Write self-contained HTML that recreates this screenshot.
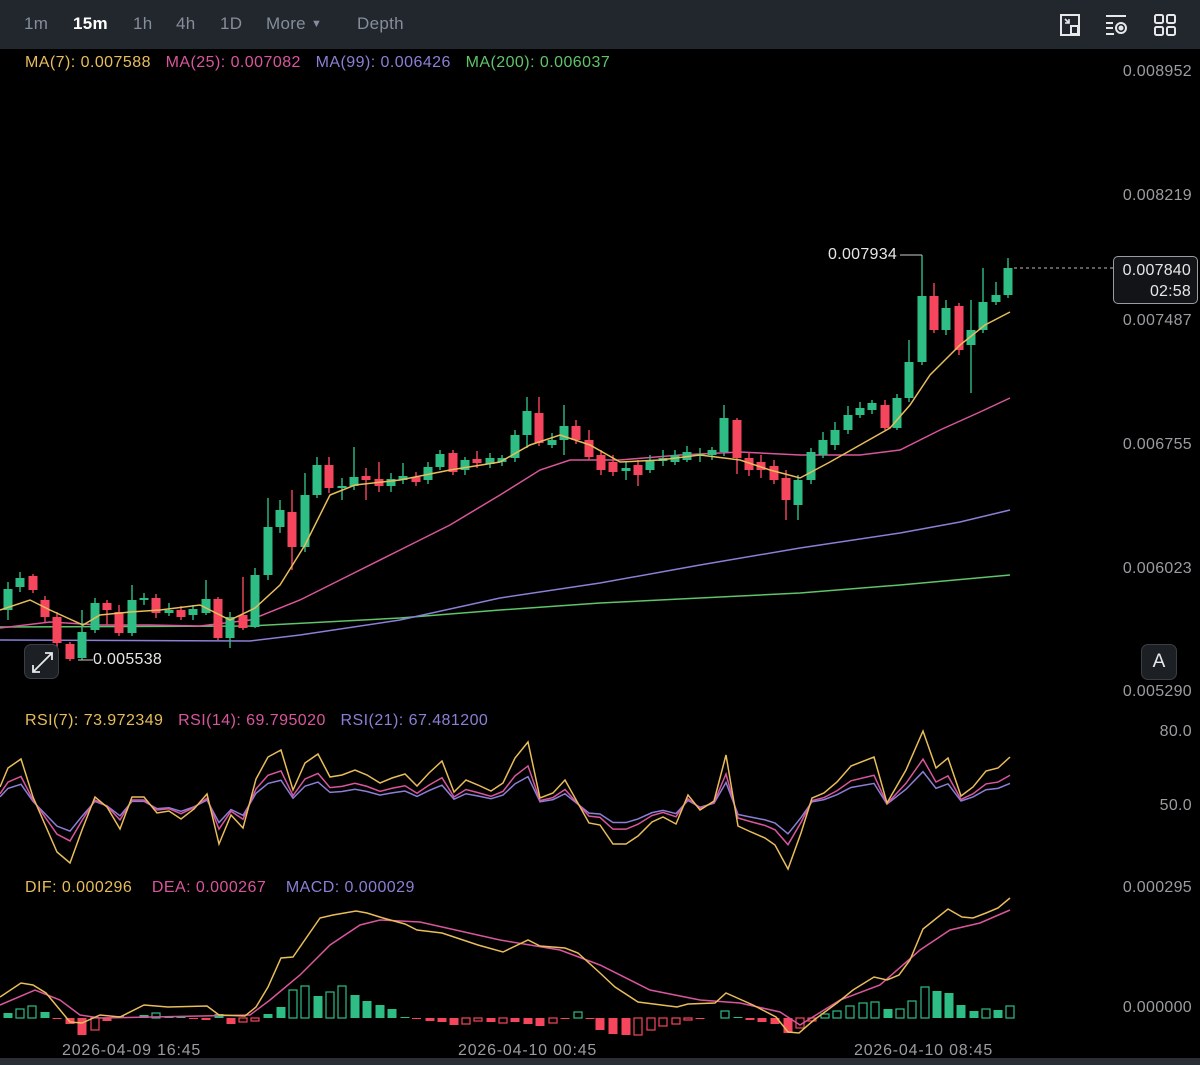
<!DOCTYPE html>
<html><head><meta charset="utf-8"><style>
*{margin:0;padding:0;box-sizing:border-box}
body{width:1200px;height:1065px;background:#000;overflow:hidden;position:relative;font-family:"Liberation Sans",sans-serif}
.t{position:absolute;white-space:nowrap}
.top{position:absolute;left:0;top:0;width:1200px;height:49px;background:#22262d}
.tab{position:absolute;top:14px;font-size:17px;color:#848e9c;letter-spacing:0.3px}
.ax{position:absolute;right:8px;font-size:16px;letter-spacing:0.3px;color:#9a9ca0;text-align:right}
.lg{position:absolute;font-size:16px;letter-spacing:0.45px;white-space:nowrap}
.dt{position:absolute;top:1042px;font-size:16px;letter-spacing:0.8px;color:#9a9ca0;white-space:nowrap}
</style></head><body>
<div class="top">
<span class="tab" style="left:24px">1m</span>
<span class="tab" style="left:73px;color:#fff;font-weight:bold">15m</span>
<span class="tab" style="left:133px">1h</span>
<span class="tab" style="left:176px">4h</span>
<span class="tab" style="left:220px">1D</span>
<span class="tab" style="left:266px">More <span style="font-size:11px;position:relative;top:-2px">▼</span></span>
<span class="tab" style="left:357px">Depth</span>
<svg style="position:absolute;left:1055px;top:12px" width="130" height="26" viewBox="0 0 130 26" fill="none" stroke="#e6e8ea" stroke-width="2">
<path d="M6 3h18v20H6z M6 3v20"/><path d="M16 14h7v8h-7z" fill="#22262d"/><path d="M10 7l4 4M10 11h4V7" stroke-width="1.6"/>
<path d="M51 4h20M51 11h7M51 16h7M51 22h8"/><circle cx="66" cy="16" r="5"/><circle cx="66" cy="16" r="1.5" fill="#e6e8ea"/>
<rect x="100" y="3" width="8" height="8" rx="1.5"/><rect x="112" y="3" width="8" height="8" rx="1.5"/><rect x="100" y="15" width="8" height="8" rx="1.5"/><rect x="112" y="15" width="8" height="8" rx="1.5"/>
</svg>
</div>
<div class="lg" style="left:25px;top:54px"><span style="color:#e8bd5a">MA(7): 0.007588</span>&nbsp;&nbsp;&nbsp;<span style="color:#d9569c">MA(25): 0.007082</span>&nbsp;&nbsp;&nbsp;<span style="color:#8b7fd6">MA(99): 0.006426</span>&nbsp;&nbsp;&nbsp;<span style="color:#5fc46a">MA(200): 0.006037</span></div>
<div class="ax" style="top:63px">0.008952</div>
<div class="ax" style="top:187px">0.008219</div>
<div class="ax" style="top:312px">0.007487</div>
<div class="ax" style="top:436px">0.006755</div>
<div class="ax" style="top:560px">0.006023</div>
<div class="ax" style="top:683px">0.005290</div>
<div class="ax" style="top:723px">80.0</div>
<div class="ax" style="top:797px">50.0</div>
<div class="ax" style="top:879px">0.000295</div>
<div class="ax" style="top:999px">0.000000</div>
<div class="lg" style="left:25px;top:712px"><span style="color:#e8bd5a">RSI(7): 73.972349</span>&nbsp;&nbsp;&nbsp;<span style="color:#d9569c">RSI(14): 69.795020</span>&nbsp;&nbsp;&nbsp;<span style="color:#8b7fd6">RSI(21): 67.481200</span></div>
<div class="lg" style="left:25px;top:879px"><span style="color:#e8bd5a">DIF: 0.000296</span>&nbsp;&nbsp;&nbsp;&nbsp;<span style="color:#d9569c">DEA: 0.000267</span>&nbsp;&nbsp;&nbsp;&nbsp;<span style="color:#8b7fd6">MACD: 0.000029</span></div>
<div class="dt" style="left:62px">2026-04-09 16:45</div>
<div class="dt" style="left:458px">2026-04-10 00:45</div>
<div class="dt" style="left:854px">2026-04-10 08:45</div>
<div style="position:absolute;left:0;top:1058px;width:1200px;height:7px;background:#2a2e35"></div>

<svg style="position:absolute;left:0;top:0" width="1200" height="1065" fill="none">
<polyline stroke="#5fc46a" stroke-width="1.5" points="0,627 250,626 400,618 500,610 600,603 700,598 800,593 900,585 1010,575"/>
<polyline stroke="#8b7fd6" stroke-width="1.5" points="0,640 250,641 300,635 400,620 500,598 600,583 700,565 800,548 900,533 960,522 1010,510"/>
<polyline stroke="#d9569c" stroke-width="1.5" points="0,628 50,622 100,625 150,625 200,626 250,620 300,600 350,575 400,550 450,525 500,495 540,470 570,460 620,460 680,455 740,452 800,455 860,455 900,450 940,430 980,412 1010,398"/>
<path stroke="#2ebd85" stroke-width="1.4" d="M8 582V620M20 572V592M82 610V660M95 598V633M132 585V636M144 593V605M169 603V616M193 605V620M206 580V615M230 612V648M255 568V628M268 498V580M280 500V533M305 473V552M317 457V498M342 478V500M354 447V490M391 473V492M403 463V484M428 462V484M440 450V470M465 457V475M490 453V468M502 455V466M515 430V462M527 397V448M552 433V448M564 405V455M626 462V480M650 455V473M663 450V466M675 450V465M687 446V462M700 448V462M712 447V460M724 405V456M798 475V520M811 448V484M823 432V458M835 422V450M848 406V434M860 402V418M872 400V414M897 394V430M909 340V402M922 255V365M946 300V335M971 300V393M983 268V333M996 282V305M1008 258V298"/>
<path stroke="#f6465d" stroke-width="1.4" d="M33 574V593M45 596V622M57 612V648M70 642V661M107 600V625M119 605V636M156 594V618M181 606V620M218 597V640M243 577V630M292 490V570M329 457V493M366 468V500M379 462V492M416 472V486M453 450V475M477 451V468M539 397V446M576 420V444M589 430V460M601 450V475M613 455V476M638 460V486M737 418V474M749 452V476M761 455V478M774 460V484M786 470V520M885 400V430M934 283V333M959 303V355"/>
<g fill="#2ebd85">
<rect x="3.5" y="589" width="9" height="21"/><rect x="15.5" y="578" width="9" height="9"/><rect x="77.5" y="632" width="9" height="26"/><rect x="90.5" y="603" width="9" height="27"/><rect x="127.5" y="600" width="9" height="33"/><rect x="139.5" y="598" width="9" height="2"/><rect x="164.5" y="610" width="9" height="3"/><rect x="188.5" y="609" width="9" height="6"/><rect x="201.5" y="599" width="9" height="14"/><rect x="225.5" y="617" width="9" height="21"/><rect x="250.5" y="575" width="9" height="52"/><rect x="263.5" y="527" width="9" height="48"/><rect x="275.5" y="510" width="9" height="17"/><rect x="300.5" y="495" width="9" height="52"/><rect x="312.5" y="465" width="9" height="30"/><rect x="337.5" y="486" width="9" height="2"/><rect x="349.5" y="477" width="9" height="9"/><rect x="386.5" y="479" width="9" height="7"/><rect x="398.5" y="476" width="9" height="4"/><rect x="423.5" y="467" width="9" height="13"/><rect x="435.5" y="454" width="9" height="13"/><rect x="460.5" y="460" width="9" height="10"/><rect x="485.5" y="458" width="9" height="6"/><rect x="497.5" y="458" width="9" height="4"/><rect x="510.5" y="435" width="9" height="23"/><rect x="522.5" y="411" width="9" height="24"/><rect x="547.5" y="440" width="9" height="5"/><rect x="559.5" y="426" width="9" height="14"/><rect x="621.5" y="468" width="9" height="3"/><rect x="645.5" y="460" width="9" height="10"/><rect x="658.5" y="458" width="9" height="3"/><rect x="670.5" y="455" width="9" height="7"/><rect x="682.5" y="452" width="9" height="8"/><rect x="695.5" y="454" width="9" height="2"/><rect x="707.5" y="450" width="9" height="5"/><rect x="719.5" y="418" width="9" height="34"/><rect x="793.5" y="480" width="9" height="25"/><rect x="806.5" y="452" width="9" height="28"/><rect x="818.5" y="440" width="9" height="15"/><rect x="830.5" y="430" width="9" height="15"/><rect x="843.5" y="415" width="9" height="15"/><rect x="855.5" y="408" width="9" height="7"/><rect x="867.5" y="403" width="9" height="7"/><rect x="892.5" y="398" width="9" height="30"/><rect x="904.5" y="362" width="9" height="36"/><rect x="917.5" y="296" width="9" height="66"/><rect x="941.5" y="308" width="9" height="22"/><rect x="966.5" y="330" width="9" height="15"/><rect x="978.5" y="302" width="9" height="28"/><rect x="991.5" y="295" width="9" height="7"/><rect x="1003.5" y="268" width="9" height="27"/>
</g>
<g fill="#f6465d">
<rect x="28.5" y="576" width="9" height="14"/><rect x="40.5" y="600" width="9" height="17"/><rect x="52.5" y="617" width="9" height="26"/><rect x="65.5" y="644" width="9" height="15"/><rect x="102.5" y="603" width="9" height="7"/><rect x="114.5" y="612" width="9" height="21"/><rect x="151.5" y="598" width="9" height="15"/><rect x="176.5" y="610" width="9" height="7"/><rect x="213.5" y="599" width="9" height="39"/><rect x="238.5" y="615" width="9" height="13"/><rect x="287.5" y="512" width="9" height="35"/><rect x="324.5" y="465" width="9" height="23"/><rect x="361.5" y="476" width="9" height="4"/><rect x="374.5" y="479" width="9" height="7"/><rect x="411.5" y="477" width="9" height="5"/><rect x="448.5" y="453" width="9" height="19"/><rect x="472.5" y="459" width="9" height="4"/><rect x="534.5" y="413" width="9" height="30"/><rect x="571.5" y="426" width="9" height="14"/><rect x="584.5" y="440" width="9" height="17"/><rect x="596.5" y="455" width="9" height="15"/><rect x="608.5" y="462" width="9" height="10"/><rect x="633.5" y="465" width="9" height="10"/><rect x="732.5" y="420" width="9" height="38"/><rect x="744.5" y="458" width="9" height="12"/><rect x="756.5" y="462" width="9" height="8"/><rect x="769.5" y="466" width="9" height="14"/><rect x="781.5" y="478" width="9" height="22"/><rect x="880.5" y="405" width="9" height="23"/><rect x="929.5" y="296" width="9" height="34"/><rect x="954.5" y="306" width="9" height="44"/>
</g>
<polyline stroke="#e8bd5a" stroke-width="1.5" points="0,610 30,600 50,610 83,625 100,615 130,612 160,610 200,605 230,620 255,608 280,585 305,545 330,495 355,485 400,480 450,470 500,462 530,445 560,435 590,445 620,462 660,460 700,455 740,460 770,470 800,478 830,462 860,445 890,428 910,405 930,375 960,345 985,325 1010,312"/>
<path stroke="#ccc" stroke-width="1" d="M900 255H922M78 660H93"/>
<path stroke="#bbb" stroke-width="1" stroke-dasharray="3,3" d="M1014 268H1113"/>
<g>
<polyline transform="translate(0,805) scale(1,0.45) translate(0,-805)" vector-effect="non-scaling-stroke" stroke="#8b7fd6" stroke-width="1.5" points="0,787 8,768 21,759 33,797 57,852 70,863 82,830 95,797 107,807 120,829 132,797 144,797 157,813 169,811 181,819 194,809 207,794 219,844 231,815 243,828 256,779 268,757 281,750 293,790 305,763 318,754 330,777 342,775 355,770 367,775 380,783 392,778 405,774 417,786 429,773 442,761 454,792 466,780 478,785 491,791 503,783 515,758 528,742 540,798 553,793 565,780 589,823 600,825 613,844 626,844 638,836 652,822 663,817 676,824 688,795 700,810 714,801 726,755 738,826 751,832 765,838 775,845 788,869 801,833 812,798 824,793 837,782 851,766 874,757 887,803 906,770 923,731 936,768 948,758 961,796 973,787 986,771 998,768 1010,757"/>
<polyline transform="translate(0,805) scale(1,0.62) translate(0,-805)" vector-effect="non-scaling-stroke" stroke="#d9569c" stroke-width="1.5" points="0,787 8,768 21,759 33,797 57,852 70,863 82,830 95,797 107,807 120,829 132,797 144,797 157,813 169,811 181,819 194,809 207,794 219,844 231,815 243,828 256,779 268,757 281,750 293,790 305,763 318,754 330,777 342,775 355,770 367,775 380,783 392,778 405,774 417,786 429,773 442,761 454,792 466,780 478,785 491,791 503,783 515,758 528,742 540,798 553,793 565,780 589,823 600,825 613,844 626,844 638,836 652,822 663,817 676,824 688,795 700,810 714,801 726,755 738,826 751,832 765,838 775,845 788,869 801,833 812,798 824,793 837,782 851,766 874,757 887,803 906,770 923,731 936,768 948,758 961,796 973,787 986,771 998,768 1010,757"/>
<polyline stroke="#e8bd5a" stroke-width="1.5" points="0,787 8,768 21,759 33,797 57,852 70,863 82,830 95,797 107,807 120,829 132,797 144,797 157,813 169,811 181,819 194,809 207,794 219,844 231,815 243,828 256,779 268,757 281,750 293,790 305,763 318,754 330,777 342,775 355,770 367,775 380,783 392,778 405,774 417,786 429,773 442,761 454,792 466,780 478,785 491,791 503,783 515,758 528,742 540,798 553,793 565,780 589,823 600,825 613,844 626,844 638,836 652,822 663,817 676,824 688,795 700,810 714,801 726,755 738,826 751,832 765,838 775,845 788,869 801,833 812,798 824,793 837,782 851,766 874,757 887,803 906,770 923,731 936,768 948,758 961,796 973,787 986,771 998,768 1010,757"/>
</g>
<g fill="#2ebd85">
<rect x="3.5" y="1013" width="9" height="5"/><rect x="40.5" y="1012" width="9" height="6"/><rect x="115" y="1016" width="9" height="2"/><rect x="127.5" y="1017" width="9" height="1"/><rect x="139.5" y="1015" width="9" height="3"/><rect x="164.5" y="1017" width="9" height="1"/><rect x="176.5" y="1017" width="9" height="1"/><rect x="214.5" y="1014" width="9" height="4"/><rect x="263.5" y="1014" width="9" height="4"/><rect x="276.5" y="1007" width="9" height="11"/><rect x="313.5" y="996" width="9" height="22"/><rect x="350.5" y="995" width="9" height="23"/><rect x="362.5" y="1001" width="9" height="17"/><rect x="375.5" y="1005" width="9" height="13"/><rect x="387.5" y="1009" width="9" height="9"/><rect x="400.5" y="1017" width="9" height="1"/><rect x="733.5" y="1017" width="9" height="1"/><rect x="883.5" y="1009" width="9" height="9"/><rect x="932.5" y="991" width="9" height="27"/><rect x="944.5" y="993" width="9" height="25"/><rect x="956.5" y="1005" width="9" height="13"/><rect x="969.5" y="1011" width="9" height="7"/><rect x="993.5" y="1010" width="9" height="8"/>
</g>
<g stroke="#2ebd85" stroke-width="1.2">
<rect x="16" y="1009" width="8" height="9"/><rect x="28" y="1006" width="8" height="12"/><rect x="152" y="1013" width="8" height="5"/><rect x="289" y="990" width="8" height="28"/><rect x="301" y="986" width="8" height="32"/><rect x="326" y="992" width="8" height="26"/><rect x="338" y="986" width="8" height="32"/><rect x="574" y="1012" width="8" height="6"/><rect x="721" y="1011" width="8" height="7"/><rect x="821" y="1014" width="8" height="4"/><rect x="833" y="1011" width="8" height="7"/><rect x="846" y="1006" width="8" height="12"/><rect x="859" y="1003" width="8" height="15"/><rect x="871" y="1002" width="8" height="16"/><rect x="896" y="1009" width="8" height="9"/><rect x="908" y="1001" width="8" height="17"/><rect x="921" y="987" width="8" height="31"/><rect x="982" y="1009" width="8" height="9"/><rect x="1006" y="1006" width="8" height="12"/>
</g>
<g fill="#f6465d">
<rect x="52.5" y="1018" width="9" height="1"/><rect x="65.5" y="1018" width="9" height="6"/><rect x="77.5" y="1018" width="9" height="17"/><rect x="102.5" y="1018" width="9" height="3"/><rect x="189" y="1018" width="9" height="1"/><rect x="201.5" y="1018" width="9" height="2"/><rect x="226.5" y="1018" width="9" height="6"/><rect x="412" y="1018" width="9" height="1"/><rect x="425.5" y="1018" width="9" height="3"/><rect x="437.5" y="1018" width="9" height="4"/><rect x="449.5" y="1018" width="9" height="7"/><rect x="486.5" y="1018" width="9" height="4"/><rect x="510.5" y="1018" width="9" height="4"/><rect x="523.5" y="1018" width="9" height="6"/><rect x="535.5" y="1018" width="9" height="8"/><rect x="560.5" y="1018" width="9" height="1"/><rect x="585.5" y="1018" width="9" height="1"/><rect x="595.5" y="1018" width="9" height="12"/><rect x="608.5" y="1018" width="9" height="16"/><rect x="621.5" y="1018" width="9" height="17"/><rect x="695.5" y="1018" width="9" height="1"/><rect x="745.5" y="1018" width="9" height="2"/><rect x="757.5" y="1018" width="9" height="4"/><rect x="770.5" y="1018" width="9" height="6"/><rect x="783.5" y="1018" width="9" height="15"/>
</g>
<g stroke="#f6465d" stroke-width="1.2">
<rect x="91" y="1018" width="8" height="12"/><rect x="239" y="1018" width="8" height="4"/><rect x="251" y="1018" width="8" height="3"/><rect x="462" y="1018" width="8" height="6"/><rect x="474" y="1018" width="8" height="3"/><rect x="499" y="1018" width="8" height="5"/><rect x="549" y="1018" width="8" height="5"/><rect x="634" y="1018" width="8" height="17"/><rect x="647" y="1018" width="8" height="12"/><rect x="659" y="1018" width="8" height="8"/><rect x="672" y="1018" width="8" height="6"/><rect x="684" y="1018" width="8" height="2"/><rect x="796" y="1018" width="8" height="10"/><rect x="808" y="1018" width="8" height="3"/>
</g>
<polyline stroke="#d9569c" stroke-width="1.5" points="0,1005 35,990 60,1000 80,1015 100,1018 250,1015 270,1000 300,975 330,945 360,925 380,920 420,922 500,940 560,950 600,965 650,990 700,1000 740,1003 780,1012 800,1025 840,1000 880,985 920,950 950,930 980,923 1010,910"/>
<polyline stroke="#e8bd5a" stroke-width="1.5" points="0,997 21,983 33,985 46,993 70,1022 82,1023 100,1015 120,1017 144,1005 168,1007 207,1006 219,1015 245,1016 256,1007 268,987 281,958 293,957 320,918 333,915 356,911 367,913 383,918 405,924 417,930 442,933 454,937 478,945 503,952 528,940 540,946 565,948 578,953 600,973 615,987 638,1002 677,1007 688,1004 715,1003 726,993 753,1005 776,1017 788,1032 799,1033 814,1020 837,1003 853,990 874,977 887,980 899,975 910,960 923,929 948,909 962,917 973,918 986,913 998,908 1010,898"/>
</svg>

<div class="t" style="left:828px;top:246px;font-size:16px;letter-spacing:0.3px;color:#e6e6e6">0.007934</div>
<div class="t" style="left:93px;top:651px;font-size:16px;letter-spacing:0.3px;color:#e6e6e6">0.005538</div>
<div style="position:absolute;left:1113px;top:256px;width:85px;height:48px;border:1px solid #9a9ca0;border-radius:5px;background:#121418;color:#e6e6e6;font-size:16px;letter-spacing:0.2px;text-align:right;padding:3px 6px 0 0;line-height:21px">0.007840<br>02:58</div>
<div style="position:absolute;left:24px;top:644px;width:35px;height:35px;border:1px solid #3a3e45;border-radius:7px;background:#1c1f24">
<svg width="35" height="35" viewBox="0 0 35 35" fill="none" stroke="#e6e8ea" stroke-width="1.8"><path d="M8 27L27 8M20 8h7v7M8 20v7h7"/></svg></div>
<div style="position:absolute;left:1141px;top:644px;width:36px;height:36px;border:1px solid #3a3e45;border-radius:7px;background:#1c1f24;color:#e6e8ea;font-size:19px;text-align:center;line-height:34px">A</div>
</body></html>
